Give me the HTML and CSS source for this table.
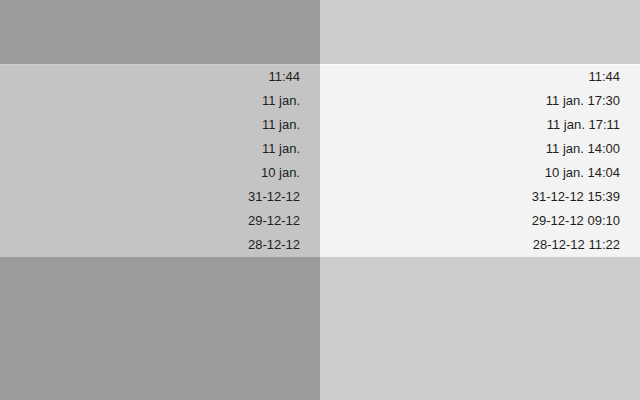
FILE: index.html
```html
<!DOCTYPE html>
<html>
<head>
<meta charset="utf-8">
<link rel="stylesheet" href="styles.css">
</head>
<body>
<div class="split">
  <div class="pane pane-dark">
    <ul class="list">
      <li>11:44</li>
      <li>11 jan.</li>
      <li>11 jan.</li>
      <li>11 jan.</li>
      <li>10 jan.</li>
      <li>31-12-12</li>
      <li>29-12-12</li>
      <li>28-12-12</li>
    </ul>
  </div>
  <div class="pane pane-light">
    <ul class="list">
      <li>11:44</li>
      <li>11 jan. 17:30</li>
      <li>11 jan. 17:11</li>
      <li>11 jan. 14:00</li>
      <li>10 jan. 14:04</li>
      <li>31-12-12 15:39</li>
      <li>29-12-12 09:10</li>
      <li>28-12-12 11:22</li>
    </ul>
  </div>
</div>
</body>
</html>
```
FILE: styles.css
```css
html, body {
  margin: 0;
  padding: 0;
  width: 640px;
  height: 400px;
  overflow: hidden;
}
body {
  font-family: "Liberation Sans", Arial, sans-serif;
  font-size: 13px;
  color: #1e1e1e;
}
.split {
  display: flex;
  height: 400px;
}
.pane {
  flex: 1;
  padding-top: 65px;
}
.pane-dark {
  background: #9b9b9b;
}
.pane-light {
  background: #cccccc;
}
.list {
  list-style: none;
  margin: 0;
  padding: 0;
}
.list li {
  height: 24px;
  line-height: 24px;
  text-align: right;
  padding-right: 20px;
}
.pane-dark .list {
  background: #c4c4c4;
  border-top: 1px solid #cdcdcd;
  margin-top: -1px;
}
.pane-light .list {
  background: #f3f3f3;
  border-top: 1px solid #fafafa;
  margin-top: -1px;
}
```
